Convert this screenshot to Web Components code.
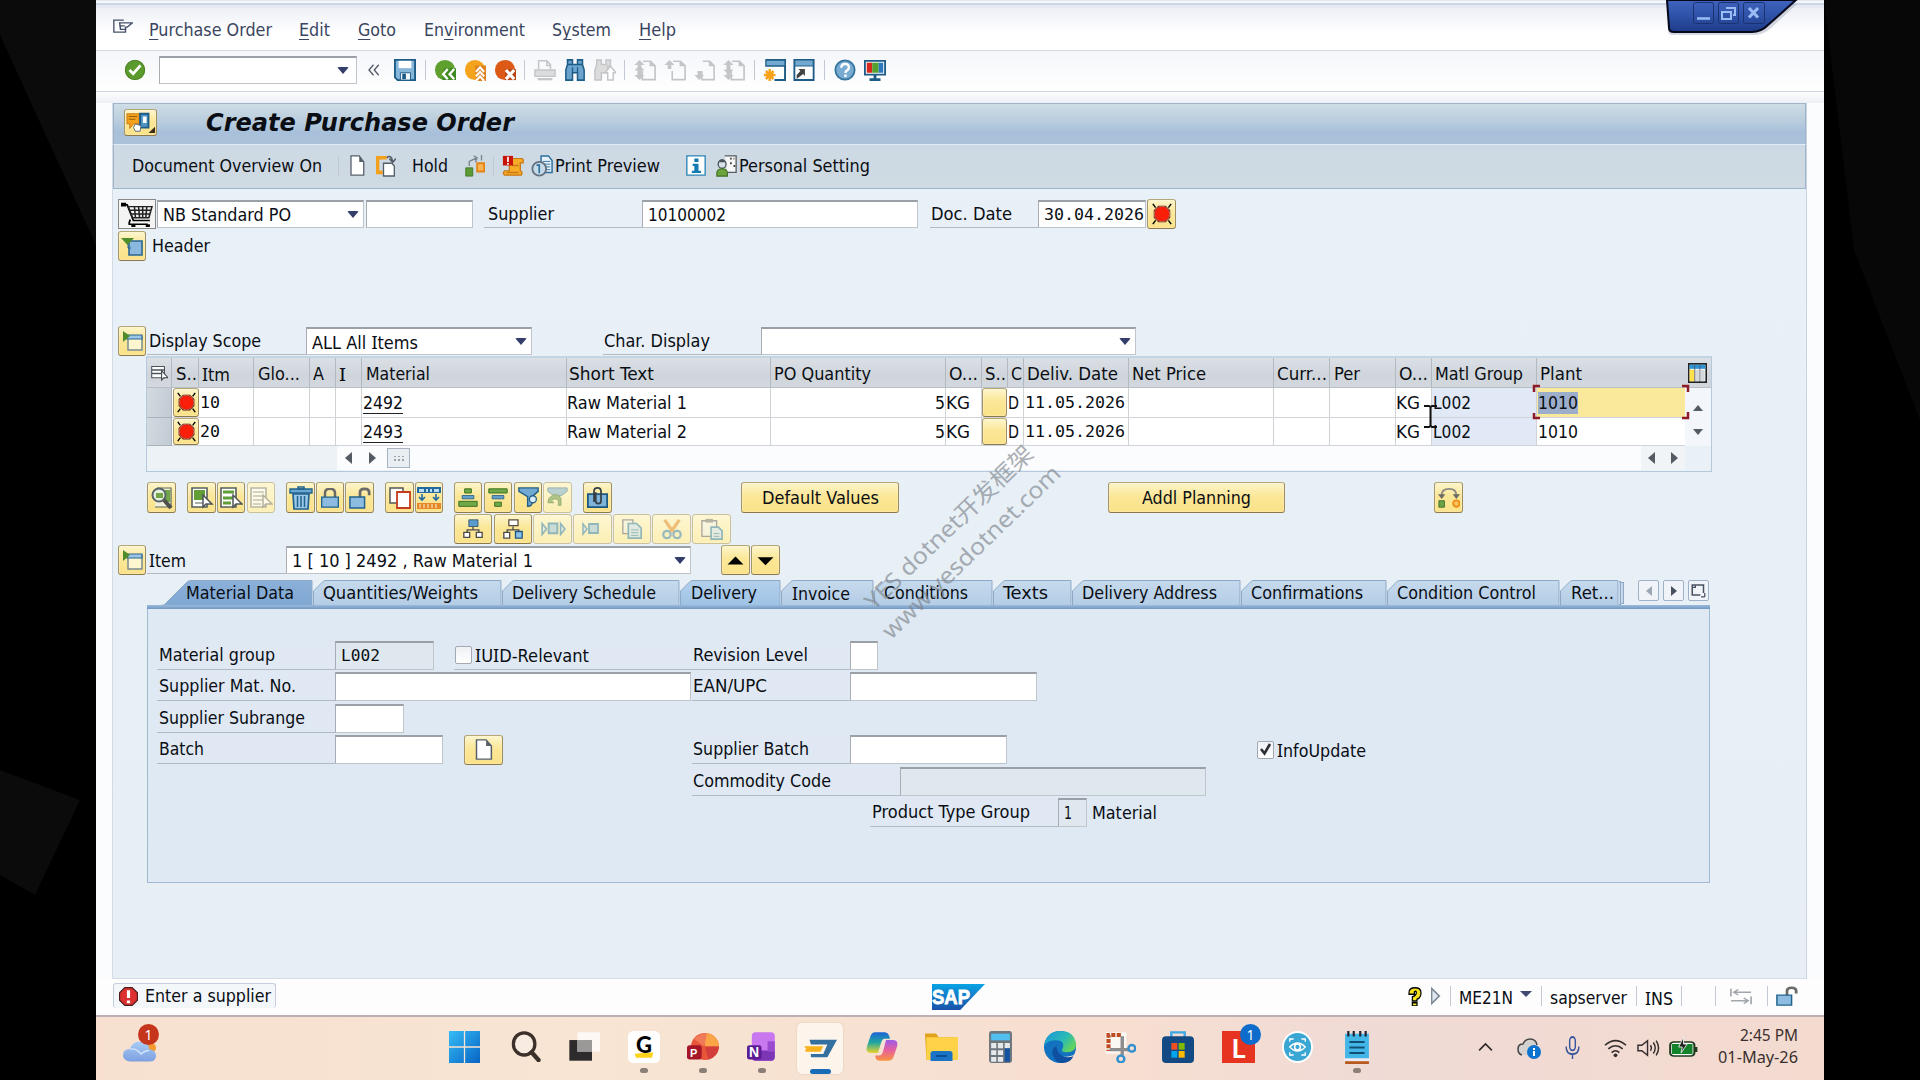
<!DOCTYPE html>
<html lang="en"><head><meta charset="utf-8"><title>Create Purchase Order</title>
<style>
html,body{margin:0;background:#000;overflow:hidden}
body{width:1920px;height:1080px}
</style></head><body>
<desk-screen></desk-screen>
<script>
const BASE='*{box-sizing:border-box}:host{display:block}.row{display:flex;align-items:center}.row>*{flex:none}';
// Register an element from its css and markup.
function define(name,css,html){
  customElements.define(name,class extends HTMLElement{
    constructor(){super();const r=this.attachShadow({mode:'open'});
      r.innerHTML='<style>'+BASE+css+'</style>'+(typeof html==='function'?html(this):html);}
  });
}
// A flex row: each item is [left, right, markup, style]; gaps become margins.
function row(x0,h,items,style=''){
  let x=x0,o='<div class="row" style="height:'+h+'px;'+style+'">';
  for(const [l,r,m,s] of items){o+=`<div style="margin-left:${l-x}px;width:${r-l}px;${s||''}">${m}</div>`;x=r;}
  return o+'</div>';
}
const cap=s=>s.replace(/I/g,'<span style="font-family:\'Noto Sans\',sans-serif">I</span>');
const ft=(w,s,o='')=>`<fit-text w="${w}" style="${o}">${cap(s)}</fit-text>`;
const t=(l,r,s,o='')=>[l,r,ft(r-l,s,o)];
const ic=(l,r,n,h=24)=>[l,r,`<sap-icon name="${n}" w="${r-l}" h="${h}"></sap-icon>`];
const bt=(l,r,n,h=30,d='',iw=24)=>[l,r,`<sap-button ${d} style="height:${h}px"><sap-icon name="${n}" w="${iw}" h="${iw}"></sap-icon></sap-button>`];
const lab=(l,r,a,b,s,h=28)=>[l,r,`<sap-label style="height:${h}px;padding-left:${a-l}px">${ft(b-a,s)}</sap-label>`];
const inp=(l,r,m='',cls='',h=28)=>[l,r,`<sap-input ${cls} style="height:${h}px">${m}</sap-input>`];
const MONO="font-family:'DejaVu Sans Mono',monospace;font-size:16.5px";

// Text stretched or narrowed to a given advance width.
customElements.define('fit-text',class extends HTMLElement{
  constructor(){super();this.attachShadow({mode:'open'}).innerHTML='<style>:host{display:block;height:22px;line-height:22px;white-space:pre;overflow:visible}span{display:inline-block;transform-origin:0 50%}</style><span><slot></slot></span>';}
  connectedCallback(){const w=+this.getAttribute('w');this.style.width=w+'px';const s=this.shadowRoot.querySelector('span');
    const n=parseFloat(getComputedStyle(s).width); if(n)s.style.transform='scaleX('+(w/n)+')';}
});

const circ=(c,m)=>`<circle cx="12" cy="12" r="11" fill="${c}"/>${m}`;
const G='#c3c5c8';
const doc=(m)=>`<path d="M10 2.500h8l5 5v15H9V13" fill="none" stroke="${G}" stroke-width="1.800"/><path d="M17 2v6h6z" fill="${G}"/>${m}`;
const up=(x,y,c=G)=>`<path d="M${x} ${y}l5.500 5.500h-3.500v4.500h-4v-4.500h-3.500z" fill="${c}"/>`;
const dn=(x,y,c=G)=>`<path d="M${x} ${y}l5.500 -5.500h-3.500v-4.500h-4v4.500h-3.500z" fill="${c}"/>`;
const page='M4 1h11l6 7v15H4z';
const I={
menu:'<path d="M13 3H1v17h14v-4" fill="none" stroke="#46506a" stroke-width="1.600"/><path d="M8 7h15l-6 6h-2v3H9zM9 11h5" fill="#fff" stroke="#46506a" stroke-width="1.800"/>',
ok:circ('#5b9a2d','<circle cx="12" cy="12" r="10.500" fill="none" stroke="#4a7f26"/><path d="M6 12l4 4 8-9" fill="none" stroke="#fff" stroke-width="3"/>'),
back2:'<path d="M10 5l-6 7 6 7M17 5l-6 7 6 7" fill="none" stroke="#555b66" stroke-width="1.800"/>',
save:'<path d="M1 1h22v22H4l-3-3z" fill="#86b6da" stroke="#1b5a85" stroke-width="2"/><path d="M5 2h14v8H5z" fill="#fff"/><path d="M7 15h11v8H7z" fill="#f2f7fb" stroke="#1b5a85"/><path d="M9 16h4v6H9z" fill="#1b5a85"/>',
gback:circ('#5fa02f','<path d="M11 10h13v13H9z" fill="#3f8a22"/><path d="M15 11l-5 5.500 5 5.500M22 11l-5 5.500 5 5.500" fill="none" stroke="#fff" stroke-width="2.500"/>'),
gup:circ('#f5a21c','<path d="M12 7h12v17H13z" fill="#dd831f"/><path d="M13 14l4.500-5 4.500 5M13 19l4.500-5 4.500 5M13 24l4.500-5 4.500 5" fill="none" stroke="#fff" stroke-width="2.300"/>'),
gx:circ('#dc5a16','<path d="M12 11h12v12H12z" fill="#b84714"/><path d="M13 12l9 10M22 12l-9 10" stroke="#fff" stroke-width="3.400"/>'),
print:`<g fill="none" stroke="${G}" stroke-width="1.600"><path d="M5 11V2h9l4 4v5M14 2v5h4"/></g><path d="M1 12h22v7H1z" fill="#dadcde" stroke="${G}" stroke-width="1.500"/><path d="M4 22h16" stroke="${G}" stroke-width="2.500"/>`,
find:'<path d="M3 6V1h6v5h6V1h6v5l2 6v11h-8v-8H9v8H1V12z" fill="#6aa3cd" stroke="#1e5c88" stroke-width="1.800"/><path d="M3 6h6M15 6h6M9 9v6M15 9v6" stroke="#1e5c88" stroke-width="1.500"/>',
findn:`<path d="M3 6V1h5v5h5V1h5v7h-3v7H8v8H1V12z" fill="#dcdcdd" stroke="${G}" stroke-width="1.600"/><path d="M18 8l6 7h-3v8h-6v-8h-3z" fill="#fff" stroke="${G}" stroke-width="1.600"/>`,
d1:doc(up(6,1)+dn(6,23)+up(6,7)),d2:doc(up(6,1)),d3:doc(dn(6,23)),d4:doc(up(6,1)+dn(6,23)+dn(6,17)),
newwin:'<path d="M3 2h20v20H12" fill="#fff" stroke="#1c5c86" stroke-width="2"/><path d="M3 2h20v6H3z" fill="#73a9d0" stroke="#1c5c86" stroke-width="1.300"/><path d="M7 11v12M1 17h12M3 13l8 8M11 13l-8 8" stroke="#f6a31a" stroke-width="2.500"/>',
short:'<path d="M1.500 2h21v20h-21z" fill="#fff" stroke="#1c5c86" stroke-width="2"/><path d="M2 2h20v6H2z" fill="#73a9d0" stroke="#1c5c86"/><path d="M4 21v-4l4-4-2-2h7v7l-2-2z" fill="#444"/>',
help:'<circle cx="12" cy="12" r="10.500" fill="#79acd2" stroke="#35749f" stroke-width="2"/><path d="M8 9.500q0-4 4.200-4t4 3.700q0 2-2 3.200-1.700 1-1.700 3M12.500 17v2.500" fill="none" stroke="#fff" stroke-width="2.600"/>',
mon:'<path d="M1 2h22v15H1z" fill="#fff" stroke="#1c5c86" stroke-width="2"/><path d="M3 4h6v11H3z" fill="#d82a1c"/><path d="M9 4h7v11H9z" fill="#54a12e"/><path d="M16 4h5v11h-5z" fill="#2c79c0"/><path d="M12 17v5M6 22.500h12" stroke="#1c5c86" stroke-width="3"/>',
serv:'<path d="M1 3h13v11H8l-4 5v-5H1z" fill="#f5a11b" stroke="#c87812"/><path d="M3 6h9M3 9h7" stroke="#8e5a10"/><path d="M15 3h9v15h-9z" fill="#4f93c4" stroke="#1c5c86" stroke-width="2"/><path d="M18 6h4v7h-4z" fill="#fff"/><path d="M10 14l6 2-1 6h-5l-2-4z" fill="#fff" stroke="#567"/><path d="M31 17v7h-7z" fill="#3a2c16"/>',
page:`<path d="${page}" fill="#fff" stroke="#56606a" stroke-width="1.700"/><path d="M15 1v7h6z" fill="#56606a"/>`,
copyy:'<path d="M13 3H2v16h6" fill="none" stroke="#f3a01d" stroke-width="4"/><path d="M9 9h10l3 3v11H9z" fill="#fff" stroke="#555f69" stroke-width="1.600"/><path d="M13 3q5-4 7 4M16 4l4 4 4-4" fill="none" stroke="#555f69" stroke-width="1.800"/>',
sub:'<path d="M2 14h8v9H2z" fill="#5c9a35" stroke="#44782a"/><path d="M15 9h8v9h-8z" fill="#f9b455" stroke="#e38413" stroke-width="2"/><path d="M6 12V7l9-4M11 1l4 2-2 5M20 0v6" fill="none" stroke="#7a848d" stroke-width="1.500"/>',
msg:'<path d="M8 4h13q3 0 2 5h-3v9q3 1 1 5H3q-3-2 0-5h5z" fill="#f7ac28" stroke="#c77715" stroke-width="1.400"/><path d="M5 20h13M11 12h7" stroke="#c77715" stroke-width="1.500"/><path d="M1 1h11v11H1z" fill="#c81408"/><path d="M6.500 2v6M6.500 9v2" stroke="#fff" stroke-width="1.800"/>',
prev:'<path d="M11 1h8l4 5v13H11z" fill="#e7f2fa" stroke="#2c6f9c" stroke-width="1.600"/><path d="M13 7h8M13 10h8M13 13h8M13 16h8" stroke="#2c6f9c"/><circle cx="9" cy="15" r="7.500" fill="#c6dbea" stroke="#66737f" stroke-width="2"/><path d="M9 10v10M6 11h3" stroke="#2c6f9c" stroke-width="1.800"/>',
info:'<path d="M1 1h22v22H1z" fill="#fff" stroke="#2b84b5" stroke-width="1.600"/><path d="M10 4h5v4h-5zM8 10h7v8h3v2.500H7V18h3v-5.500H8z" fill="#167bb1"/>',
person:'<path d="M10 1h13v18H13" fill="#f6f6f6" stroke="#575d63" stroke-width="1.500"/><path d="M16 4h2M20 4h1M16 9h2M20 12h2" stroke="#444" stroke-width="2"/><circle cx="7" cy="10" r="4.500" fill="#dbe2e7" stroke="#48535d" stroke-width="1.500"/><path d="M3 8q4-7 8 0z" fill="#48535d"/><path d="M1 23v-4q1-4 6-4t6 4v4z" fill="#6da43c" stroke="#3d6e25" stroke-width="1.300"/>',
cart:'<path d="M1 4h5l6 17h16M9 20l-1 3v2h18" fill="none" stroke="#000" stroke-width="1.700"/><path d="M7 6h23l-3 12H11zM8 10h21M10 14h18M13 6l1 12M17 6l1 12M21 6v12M25 6l-1 12" fill="none" stroke="#222" stroke-width="1.500"/><path d="M0 2h5v4H0zM10 25h4v3h-4zM24 25h4v3h-4z"/>',
shut:'<path d="M9 7h13v14H9z" fill="#8bb9dd" stroke="#2a6693" stroke-width="1.600"/><path d="M8 7v7h3" fill="none" stroke="#2a6693"/><path d="M1 4h13l-6.500 7z" fill="#4f8d2a"/>',
open:'<path d="M8 8h14v13H8z" fill="#fdf6cf" stroke="#7a8d92" stroke-width="1.500"/><path d="M7 6h15v4H7z" fill="#9cc6e6" stroke="#2a6693" stroke-width="1.200"/><path d="M3 2l7 5-7 6z" fill="#4f8d2a"/>',
red:'<g stroke="#000" stroke-width="1.600"><path d="M2 1l3 4M22 1l-3 4M2 23l3-4M22 23l-3-4"/></g><path d="M8 3h8l5 5v8l-5 5H8l-5-5V8z" fill="#5c1208"/><circle cx="12" cy="12" r="8" fill="#fa1f08"/><circle cx="12" cy="12" r="8.500" fill="none" stroke="#d48a7a" stroke-width=".8"/>',
detail:'<path d="M7 2h14v19H5" fill="#f2efd8" stroke="#5d6a58" stroke-width="1.200"/><path d="M14 4h6v12h-6z" fill="#71a648"/><circle cx="9" cy="9" r="6.500" fill="#e7f0df" stroke="#59636a" stroke-width="2"/><path d="M6 7h7v5H6z" fill="#71a648"/><path d="M14 14l7 8" stroke="#4e4f4b" stroke-width="4"/>',
selall:'<path d="M2 2h15v19H2z" fill="#fff" stroke="#55605a" stroke-width="1.600"/><path d="M4 4h11v10H4z" fill="#5f9f36"/><path d="M5 17h8" stroke="#55605a"/><path d="M13 9v12l3-3h6z" fill="#fff" stroke="#4e555b" stroke-width="1.500"/>',
selblk:'<path d="M2 2h15v19H2z" fill="#fff" stroke="#55605a" stroke-width="1.600"/><path d="M4 6h11M4 12h11M4 17h8" stroke="#5f9f36" stroke-width="3"/><path d="M14 9v12l3-3h6z" fill="#fff" stroke="#4e555b" stroke-width="1.500"/>',
desel:'<path d="M2 2h15v19H2z" fill="#fff" stroke="#8a8f92" stroke-width="1.600"/><path d="M4 6h11M4 10h11M4 14h11M4 18h8" stroke="#a4a7aa" stroke-width="1.500"/><path d="M14 9v12l3-3h6z" fill="#fff" stroke="#888" stroke-width="1.500"/>',
trash:'<path d="M4 8h16l-1 15H5z" fill="#9cc9e8" stroke="#22628f" stroke-width="1.700"/><path d="M1 3h22v4H1z" fill="#6aa7d2" stroke="#22628f" stroke-width="1.400"/><path d="M9 1h6v2H9zM8.500 10v11M12 10v11M15.500 10v11" fill="none" stroke="#22628f" stroke-width="1.500"/>',
lock:'<path d="M6 11V6q0-5 6-5t6 5v5" fill="none" stroke="#6a6b67" stroke-width="3"/><path d="M2 11h20v12H2z" fill="#8dbce0" stroke="#22628f" stroke-width="1.600"/>',
unlock:'<path d="M12 11V6q0-4 5-4t5 4v3" fill="none" stroke="#6a6b67" stroke-width="3"/><path d="M1 11h16v12H1z" fill="#8dbce0" stroke="#22628f" stroke-width="1.600"/>',
dup:'<path d="M2 2h13v15H2z" fill="#fff" stroke="#565656" stroke-width="1.500"/><path d="M9 6h13v16H9z" fill="#fdfdfd" stroke="#c33c1e" stroke-width="1.800"/>',
scale:'<path d="M0 1h24v6H0z" fill="#2269a0"/><path d="M2 3h5v3H2zM9 3h2v3H9zM13 3h2v3h-2zM17 3h5v3h-5z" fill="#bcdcf2"/><path d="M5 8v5M19 8v5M2 11l3 3 3-3M16 11l3 3 3-3" stroke="#2269a0" fill="none" stroke-width="1.600"/><path d="M0 17h24v6H0z" fill="#e5882a"/><path d="M3 18v4M7 18v4M11 18v4M15 18v4M19 18v4" stroke="#fff0cf"/>',
sasc:'<path d="M8 1h8v5H8zM1 16h22v6H1z" fill="#6fa846" stroke="#3e7422" stroke-width="1.200"/><path d="M5 9h14v4H5z" fill="#639fca" stroke="#245f89"/>',
sdesc:'<path d="M1 1h22v5H1zM8 17h8v5H8z" fill="#6fa846" stroke="#3e7422" stroke-width="1.200"/><path d="M5 9h14v4H5z" fill="#639fca" stroke="#245f89"/>',
filter:'<path d="M1 1h22v4l-7 6v7q0 4-5 4V11L1 5z" fill="#71a9d3" stroke="#245f89" stroke-width="1.600"/><circle cx="17" cy="14" r="4" fill="#d8ebf7" stroke="#245f89" stroke-width="1.500"/>',
unfilter:'<path d="M1 1h22v4l-7 5H8L1 5z" fill="#8fbad6" stroke="#4c7c96"/><path d="M2 13q9-9 14 0v8h-3v-6q-5-3-8 1l3 2H1z" fill="#7da85c" stroke="#557c42"/>',
clip:'<path d="M1 8h22v15H1z" fill="#7fb4da" stroke="#1d5882" stroke-width="2"/><path d="M8 17V5q0-4 4-4t4 4v11q0 3-3 3t-3-3V6" fill="none" stroke="#364148" stroke-width="2"/>',
tree1:'<path d="M7 1h11v8H7z" fill="#5a9bcb" stroke="#2c4f6a"/><path d="M12 9v4M5 17v-4h14v4" fill="none" stroke="#4c4c4c" stroke-width="1.600"/><path d="M1 16h7v6H1zM16 16h7v6h-7z" fill="#fff" stroke="#4c4c4c" stroke-width="1.600"/>',
tree2:'<path d="M7 1h11v7H7z" fill="#fff" stroke="#5a4c3c" stroke-width="1.500"/><path d="M12 9v4M5 17v-4h14v4" fill="none" stroke="#4c4c4c" stroke-width="1.600"/><path d="M1 16h7v7H1z" fill="#fff" stroke="#4c4c4c" stroke-width="1.600"/><path d="M15 15h8v8h-8z" fill="#8cc0e6" stroke="#1d5882" stroke-width="1.600"/>',
nx1:'<path d="M2 7v10l4-5zM19 7v10l4-5z" fill="#dfeaf0" stroke="#4a8fb5" stroke-width="1.500"/><path d="M8 7h8v9H8z" fill="#a9cde3" stroke="#4a8fb5" stroke-width="1.800"/>',
nx2:'<path d="M2 7v10l4-5z" fill="#dfeaf0" stroke="#4a8fb5" stroke-width="1.500"/><path d="M8 7h9v9H8z" fill="#a9cde3" stroke="#4a8fb5" stroke-width="1.800"/>',
copy:'<path d="M2 2h11v15H2z" fill="#f3f3e6" stroke="#778" stroke-width="1.500"/><path d="M8 6h9l5 5v11H8z" fill="#cfe4f2" stroke="#4a8fb5" stroke-width="1.800"/><path d="M11 13h8M11 16h8M11 19h8" stroke="#4a8fb5"/>',
cut:'<path d="M4 2l9 13M20 2l-9 13" stroke="#e79b43" stroke-width="3.500"/><circle cx="6.500" cy="18" r="4" fill="none" stroke="#5797bd" stroke-width="2.500"/><circle cx="17.500" cy="18" r="4" fill="none" stroke="#5797bd" stroke-width="2.500"/>',
paste:'<path d="M1 3h16v17H1z" fill="#f5f5ec" stroke="#778" stroke-width="1.500"/><path d="M5 1h8v4H5z" fill="#888"/><path d="M11 10h8l4 4v9H11z" fill="#d4e7f3" stroke="#4a8fb5" stroke-width="1.800"/><path d="M14 17h6M14 20h6" stroke="#4a8fb5"/>',
planq:'<path d="M4 9q0-7 8-7t8 7" fill="none" stroke="#8a8a80" stroke-width="2"/><path d="M0 8h8l-4 5zM16 8h8l-4 5z" fill="#6b6b64"/><path d="M1 15h6v7H1z" fill="#6aa345" stroke="#3e6c2b"/><circle cx="20" cy="18" r="3.500" fill="#fbc266" stroke="#ef8d10" stroke-width="2"/>',
upb:'<path d="M2 17l10-10 10 10z"/>',dnb:'<path d="M2 8l10 10 10-10z"/>',
cfg:'<path d="M1 1h22v22H1z" fill="#fff" stroke="#222" stroke-width="2"/><path d="M2 2h20v5H2z" fill="#2f93d4"/><path d="M2 8h6v14H2z" fill="#ffe24a"/><path d="M9 8h5v14H9zM16 8h5v14h-5z" fill="#d4d9de"/><path d="M8.500 2v20M15 2v20" stroke="#556"/>',
colsel:'<path d="M1 2h18v16H1z" fill="#fff" stroke="#4c545c" stroke-width="1.500"/><path d="M1 7h18M1 12h14" stroke="#4c545c" stroke-width="2"/><path d="M15 8v13l3-3h6z" fill="#fff" stroke="#3c4248" stroke-width="1.500"/>',
list:'<path d="M15 19H2V3h18v13" fill="none" stroke="#48515f" stroke-width="2.400"/><path d="M22 22h-6M22 22v-6M2 7h5V3" fill="none" stroke="#48515f" stroke-width="2"/>',
stop:'<path d="M7 0h10l7 7v10l-7 7H7l-7-7V7z" fill="#4b1c1c"/><path d="M7.500 1.500h9l6 6v9l-6 6h-9l-6-6v-9z" fill="#dd3030"/><path d="M12 4v10M12 17v3.500" stroke="#fff" stroke-width="4"/>',
sap:'<defs><linearGradient id="g" x2="0" y2="1"><stop offset="0" stop-color="#0aa3e4"/><stop offset="1" stop-color="#1a52a8"/></linearGradient></defs><path d="M0 0h24L12.800 24H0z" fill="url(#g)"/>',
q:'<path d="M3 8q0-6 9-6t9 6-6 8v2H8v-5q6-2 6-5t-3-1v3H3zM8 20h7v4H8z" fill="#f5e21c" stroke="#000" stroke-width="1.800"/>',
tri:'<path d="M5 2v20L19 12z" fill="#dfe6ee" stroke="#7b8794" stroke-width="2.500"/>',
tabs:`<path d="M1 1v11M4 6h19M23 12v11M1 18h19M9 2L4 6l5 4M15 14l5 4-5 4" fill="none" stroke="#a2a7ac" stroke-width="1.800"/>`,
weather:'<defs><linearGradient id="w" x2="0" y2="1"><stop stop-color="#a9cdf5"/><stop offset="1" stop-color="#7d9fe0"/></linearGradient></defs><circle cx="20" cy="11" r="4" fill="#f49a2e"/><path d="M5 22q-5-1-5-5 0-5 5-5 2-6 7-6 7 0 7 6 5 1 5 5.500T19 22z" fill="url(#w)"/><path d="M5 12q5-1 8 4 3-3 6-3" stroke="#d6e7fb" fill="none"/>',
win:'<defs><linearGradient id="b" x2="1" y2="1"><stop stop-color="#35bdf6"/><stop offset="1" stop-color="#0763c4"/></linearGradient></defs><path d="M0 0h11.500v11.500H0zM12.500 0H24v11.500H12.500zM0 12.500h11.500V24H0zM12.500 12.500H24V24H12.500z" fill="url(#b)"/>',
mag:'<circle cx="10.500" cy="10" r="8.600" fill="#f7ebe2" stroke="#3c302a" stroke-width="2.600"/><path d="M16.500 16.500L22 22.500" stroke="#3c302a" stroke-width="3.500" stroke-linecap="round"/>',
task:'<path d="M1 7h17v16H1z" fill="#2d2b2b"/><path d="M7 1h17v15H7z" fill="#fff" opacity=".72"/><path d="M7 7h11v9H7z" fill="#9b9898"/>',
gicon:'<rect width="24" height="24" rx="4" fill="#fff"/><path d="M5 17l14-1-1 4H6z" fill="#ffd21a"/>',
ppt:'<circle cx="13.500" cy="12" r="10.500" fill="#e8563a"/><path d="M13.500 1.500A10.500 10.500 0 0124 12H13.500z" fill="#fba646"/><path d="M13.500 12H24q-1 8-8 10z" fill="#d33d3a"/><path d="M5 6q8-6 10-4l-2 10z" fill="#ef7b58"/><rect y="11" width="11" height="11" rx="2" fill="#a51527"/>',
one:'<rect x="4" y="1" width="19" height="22" rx="3" fill="#c877ef"/><path d="M4 15h19v5q0 3-3 3H7q-3 0-3-3z" fill="#7c35b5"/><path d="M17 8h6v8h-6z" fill="#9a4bd0"/><rect y="11" width="12" height="11" rx="2" fill="#5c1d94"/>',
logon:'<path d="M4 1h20L17 23H5v-4h9l3-12H5z" fill="#33709f"/><path d="M0 9h14l-2 7H1v-3h1z" fill="#f7b11b"/>',
copilot:'<defs><linearGradient id="c" x2="0" y2="1"><stop stop-color="#1c63d8"/><stop offset=".5" stop-color="#21a8a0"/><stop offset="1" stop-color="#e9d32b"/></linearGradient><linearGradient id="d" x2="0" y2="1"><stop stop-color="#9c5ce8"/><stop offset=".5" stop-color="#e8609b"/><stop offset="1" stop-color="#f7953f"/></linearGradient></defs><path d="M7 1h7q3 0 4 5h-4q-2 0-3 4l-2 7H4q-5 0-3-6l2-6q1-4 4-4z" fill="url(#c)"/><path d="M17 23h-7q-3 0-3-4h3q2 0 3-4l2-8h5q5 0 3 6l-2 6q-1 4-4 4z" fill="url(#d)"/>',
folder:'<path d="M0 2h8l2 3h13v18H1z" fill="#e2a11a"/><path d="M1 5h23v18H1z" fill="#ffd248"/><path d="M4 24v-6q0-2 2-2h12q2 0 2 2v6z" fill="#1a73c5"/><path d="M8 20h8" stroke="#0a4d92" stroke-width="1.500"/>',
calc:'<rect x="1" width="22" height="24" rx="2" fill="#6d757d"/><path d="M3 2h18v5H3z" fill="#51c0ef"/><path d="M3 9h5v4H3zM9.500 9h5v4h-5zM16 9h5v4h-5zM3 14.500h5v3.500H3zM9.500 14.500h5v3.500h-5zM3 19.500h5V23H3zM9.500 19.500h5V23h-5z" fill="#e6e8ea"/><path d="M16 13h5v10h-5z" fill="#1352a0"/>',
edge:'<defs><linearGradient id="e" x2="1" y2=".6"><stop stop-color="#1b93da"/><stop offset=".6" stop-color="#27b9b8"/><stop offset="1" stop-color="#63d45d"/></linearGradient></defs><circle cx="12" cy="12" r="12" fill="#1272bf"/><path d="M0 11Q2 0 12 0q11 0 12 10 0 6-7 6-5 0-3-3 2-6-5-6-6 0-9 4z" fill="url(#e)"/><path d="M9 11q-4 12 14 7l-2 2q-2 0-4 0-9 0-8-9z" fill="#fbe6da"/><path d="M9 11q-5 4-1 10 2 3 6 3 6 0 8-5-11 3-13-8z" fill="#0f4f9f"/>',
snip:'<path d="M2 1h15v16H2z" fill="#fbf7f3"/><path d="M13 3H4v12" fill="none" stroke="#c04b22" stroke-width="3" stroke-dasharray="3 1"/><path d="M14 4v14M5 14h14" stroke="#8d8d8d" stroke-width="2.500"/><circle cx="21" cy="13" r="2.500" fill="none" stroke="#3090d0" stroke-width="1.800"/><circle cx="13" cy="21" r="2.500" fill="none" stroke="#3090d0" stroke-width="1.800"/>',
store:'<path d="M7 5V1h10v4" fill="none" stroke="#3aa7e4" stroke-width="1.800"/><rect y="4" width="24" height="20" rx="3" fill="#134a83"/><path d="M7 9h4.500v5H7z" fill="#f25022"/><path d="M12.500 9H17v5h-4.500z" fill="#7fba00"/><path d="M7 15h4.500v5H7z" fill="#00a4ef"/><path d="M12.500 15H17v5h-4.500z" fill="#ffb900"/>',
eye:'<circle cx="12" cy="12" r="12" fill="#fff"/><circle cx="12" cy="12" r="10.500" fill="#3aa6d3"/><path d="M6 12q6-6 12 0-6 6-12 0z" fill="none" stroke="#fff" stroke-width="1.100"/><circle cx="12" cy="12" r="2.200" fill="none" stroke="#fff" stroke-width="1.200"/><path d="M6 8V6h3M18 8V6h-3M6 16v2h3M18 16v2h-3" fill="none" stroke="#fff"/>',
note:'<path d="M1 22h22v2H1z" fill="#b65a1e"/><path d="M1 2h22v18H1z" fill="#42b6e6"/><path d="M0 20h24v1.500H0z" fill="#eef"/><path d="M5 8h14M5 12h14M5 16h14" stroke="#124e74" stroke-width="1.300"/><path d="M4 0v4M9 0v4M15 0v4M20 0v4" stroke="#223" stroke-width="2"/>',
chev:'<path d="M3 16l9-9 9 9" fill="none" stroke="#2d2727" stroke-width="2.200"/>',
cloudi:'<path d="M5 19q-4-1-4-6t5-5q2-5 7-5 6 0 7 6" fill="#d4d1cf" stroke="#444" stroke-width="1.500"/><path d="M5 19h9V9H5z" fill="#d4d1cf"/><circle cx="17" cy="16" r="7" fill="#0c72cf"/><path d="M17 12v2M17 15v5" stroke="#fff" stroke-width="2"/>',
mic:'<rect x="8" y="1" width="8" height="14" rx="4" fill="none" stroke="#35549b" stroke-width="2"/><path d="M3 11q0 8 9 8t9-8M12 19v5" fill="none" stroke="#35549b" stroke-width="2"/>',
wifi:'<path d="M1 9q11-10 22 0M4.500 13q7.500-7 15 0M8 17q4-4 8 0" fill="none" stroke="#352d2d" stroke-width="1.700"/><circle cx="12" cy="20" r="2" fill="#352d2d"/>',
spk:'<path d="M1 9h4l6-5v16l-6-5H1z" fill="none" stroke="#352d2d" stroke-width="1.500"/><path d="M14 9q2 3 0 6M17 6q4 6 0 12M20 4q5 8 0 16" fill="none" stroke="#352d2d" stroke-width="1.500"/>',
batt:'<rect x="1" y="6" width="20" height="14" rx="3" fill="#fff" stroke="#1f3a1c" stroke-width="1.700"/><rect x="2.500" y="8" width="17" height="10" fill="#12832a"/><path d="M22.500 11v5" stroke="#1f3a1c" stroke-width="2"/><path d="M12 1L8 11h3l-1 6 5-9h-3z" fill="#222" stroke="#eee" stroke-width=".8"/>'
};
const VB={serv:'0 0 32 25',cart:'0 0 31 29'};
define('sap-icon',':host{display:block}svg{display:block}',e=>{const n=e.getAttribute('name');
 return `<svg width="${e.getAttribute('w')}" height="${e.getAttribute('h')}" viewBox="${VB[n]||'0 0 24 24'}" preserveAspectRatio="none">${I[n]||''}</svg>`});
define('sap-button',`:host{display:flex;align-items:center;justify-content:center;border:1px solid #a6966a;border-color:#b5a778 #a08c5c #8c794b #a6966a;border-radius:3px;background:linear-gradient(#fdf5cc,#fbe797 45%,#fbe28a);box-shadow:inset 0 0 0 1px #fff3}
:host([off]){background:linear-gradient(#fdf6d2,#fcefb4);border-color:#cbc099}:host([off]) ::slotted(*){opacity:.6}`,'<slot></slot>');
define('sap-label',':host{display:flex;align-items:center;border-bottom:1px solid #b3bac2;background:#e6ebf122}','<slot></slot>');
define('sap-input',':host{display:flex;align-items:center;background:#fff;border:1px solid #a9adb3;border-top:2px solid #9b9fa6;border-right-color:#c0c5cb;border-bottom-color:#c0c5cb;padding-left:5px}:host([ro]){background:#dfe8ef}i{margin-left:auto;margin-right:var(--mr,4px);display:none;border:6px solid transparent;border-top:7px solid #353d6b;border-bottom:0;border-radius:2px}:host([dd]) i{display:block}','<slot></slot><i></i>');
define('sap-check',':host{display:block;width:17px;height:18px;border:1.500px solid #a3a9b1;border-radius:2px;background:linear-gradient(#eef1f5,#fff)}svg{display:block}',e=>e.hasAttribute('on')?'<svg width="15" height="15" viewBox="0 0 15 15"><path d="M3 7l3.500 4.500L12 2" fill="none" stroke="#2c3036" stroke-width="2.600"/></svg>':'');
define('sap-sep',':host{display:block;width:1px;height:20px;background:#c3c9d2}','');

// Menu bar.
define('sap-menu',':host{color:#3a4560}.row{padding-top:3px}u{text-underline-offset:3px;text-decoration-thickness:1.300px}.s{height:8px;background:linear-gradient(#e2e6ef 0 1px,#f4f6fa 1px 3px,#ccd6e6 3px 5px,#e6e9f2 5px 8px)}.m{background:linear-gradient(#eef0f6,#fff 60%);border-bottom:1px solid #d3d8df;height:43px}',
'<div class="s"></div><div class="m">'+row(96,41,[
 [113,133,'<sap-icon name="menu" w="20" h="17"></sap-icon>','margin-top:-8px'],
 t(149,272,'<u>P</u>urchase Order'),t(299,330,'<u>E</u>dit'),t(358,396,'<u>G</u>oto'),t(424,525,'En<u>v</u>ironment'),t(552,611,'S<u>y</u>stem'),t(639,676,'<u>H</u>elp')])+'</div>');
const sep=x=>[x,x+1,'<sap-sep></sap-sep>'];
define('sap-toolbar',':host{background:linear-gradient(#f4f6fa,#fff);border-bottom:1px solid #cfd6df;height:41px}',
row(96,38,[ic(124,146,'ok',22),[159,357,'<sap-input dd style="height:28px;--mr:7px"></sap-input>'],ic(366,384,'back2',18),ic(394,416,'save',22),sep(425),ic(434,456,'gback',22),ic(464,486,'gup',22),ic(494,516,'gx',22),sep(524),ic(534,556,'print',22),ic(565,585,'find',22),ic(594,616,'findn',22),sep(624),ic(634,656,'d1',22),ic(664,686,'d2',22),ic(694,715,'d3',22),ic(723,745,'d4',22),sep(754),ic(763,786,'newwin'),ic(793,815,'short'),sep(824),ic(834,856,'help',22),ic(864,886,'mon',22)]));
define('sap-title',':host{height:42px;border:1px solid #9fb3c9;border-bottom-color:#e3ecf5;background:linear-gradient(#cfdde6,#b8ccdd 45%,#a8c0da 70%,#aac1d9)}',
row(114,38,[[124,157,'<sap-button style="height:27px"><sap-icon name="serv" w="30" h="23"></sap-icon></sap-button>','margin-top:-2px'],[206,516,'<fit-text w="308" style="font:italic bold 24px/30px \'DejaVu Sans Condensed\',\'DejaVu Sans\',sans-serif;height:30px">Create Purchase Order</fit-text>']]));
define('sap-apptools',':host{height:44px;border:1px solid #9fb3c9;border-top:0;background:linear-gradient(#cdd9e4,#cfdae2)}',
row(114,41,[t(132,322,'Document Overview On'),sep(338),ic(348,366,'page',21),ic(376,396,'copyy',22),t(412,448,'Hold'),ic(464,485,'sub',22),sep(493),ic(502,524,'msg',21),ic(531,553,'prev',22),t(555,660,'Print Preview'),ic(686,706,'info',21),ic(716,737,'person',22),t(739,870,'Personal Setting')]));
const one='margin-top:1px';
define('sap-header','',row(113,30,[[118,156,'<div style="width:38px;height:30px;border:1px solid #888;background:#f4f4f4;padding:1px 2px"><sap-icon name="cart" w="32" h="27"></sap-icon></div>'],inp(157,364,ft(128,'NB Standard PO'),'dd'),inp(366,473),lab(484,642,488,554,'Supplier'),inp(642,918,ft(78,'10100002')),lab(930,1038,931,1012,'Doc. Date'),inp(1038,1146,ft(100,'30.04.2026',MONO)),bt(1147,1176,'red',30,'',22)])
+row(113,30,[bt(118,146,'shut'),t(152,210,'Header')],'margin-top:2px'));

// Item table.
const C=[147,172,199,254,310,336,362,567,771,946,982,1008,1024,1129,1274,1330,1396,1432,1537,1685];
const H=[null,[176,197,'S..'],[202,230,'Itm'],[258,300,'Glo...'],[313,324,'A'],[339,346,'I'],[366,430,'Material'],[569,654,'Short Text'],[774,871,'PO Quantity'],[949,978,'O...'],[985,1006,'S..'],[1011,1022,'C'],[1027,1118,'Deliv. Date'],[1132,1206,'Net Price'],[1277,1327,'Curr...'],[1334,1360,'Per'],[1399,1428,'O...'],[1435,1523,'Matl Group'],[1540,1582,'Plant']];
const cell=(i,m,x,cls='')=>`<div class="c ${cls}" style="width:${C[i+1]-C[i]}px;padding-left:${x?x-C[i]:0}px">${m}</div>`;
function trow(n,h){const a={2:[200,220,n+'0',MONO],6:[363,403,n==1?'2492':'2493'],7:[567,687,'Raw Material '+n],8:[935,945,'5'],9:[946,970,'KG'],11:[1008,1019,'D'],12:[1025,1125,'11.05.2026',MONO],16:[1396,1420,'KG'],17:[1433,1471,'L002'],18:[1538,1578,'1010']};
 let o=`<div class="tr" style="height:${h}px">`;
 for(let i=0;i<19;i++){let m='',x=0;
  if(i==0){o+=cell(i,'',0,'hd');continue}
  if(i==1){o+=cell(i,`<sap-button style="width:26px;height:${h-1}px"><sap-icon name="red" w="21" h="21"></sap-icon></sap-button>`,173,'nb');continue}
  if(i==10){o+=cell(i,`<sap-button style="width:25px;height:${h-1}px"></sap-button>`,982,'nb');continue}
  if(a[i]){x=a[i][0];m=ft(a[i][1]-x,a[i][2],a[i][3]||'');}
  o+=cell(i,m,x,(i==6?'ln ':'')+(i==17?'mg ':'')+(i==18?(n==1?'sel':'nb'):''));}
 return o+'</div>';}
define('sap-table',`:host{width:1566px;height:116px;border:1px solid #b4c9dc;border-top:2px solid #c3d5e3;background:#e9f0f6}
.tr{display:flex;width:1538px}.c{flex:none;height:100%;border-right:1px solid #cfd2d6;border-bottom:1px solid #d0d3d7;background:#fff;display:flex;align-items:center}
.h{width:1564px;height:30px;background:linear-gradient(#dae0e6,#cfd5da 60%,#d2d8dd);border-bottom:1px solid #b9bfc6}.h .c{background:none;border-bottom:0;border-right-color:#b3b9c0;padding-top:2px}
.hd{background:linear-gradient(100deg,#d3dae1,#c2cad3);border-color:#aab2bb}.nb{border-right:0}.mg{background:#e0e9f5}.ln fit-text{border-bottom:1.500px solid #222}
.sel{background:#fbe99b;border-right:0}.sel fit-text{background:#9daecb}.b{display:grid;grid-template-columns:1538px 26px}.v{background:#f3f6fa;display:flex;flex-direction:column;align-items:center;padding-top:17px;gap:18px}
.a{width:0;height:0;border:5px solid transparent}.u{border-bottom:6px solid #555b63;border-top:0}.d{border-top:6px solid #555b63;border-bottom:0}.l{border-right:7px solid #555b63;border-left:0;border-top-width:6px;border-bottom-width:6px}.r{border-left:7px solid #555b63;border-right:0;border-top-width:6px;border-bottom-width:6px}
.sb{background:linear-gradient(90deg,#edf2f7 0 190px,#fbfcfd 190px 1494px,#f1f4f7 1494px 1538px,#e9f0f6 1538px)}.th{height:20px;border:1px solid #a9b3bf;background:#e9eef3;display:grid;grid-template-columns:2px 2px 2px;gap:2px;place-content:center}.th i{width:2px;height:1.500px;background:#9aa3ae}`,
'<div class="h tr">'+H.map((v,i)=>i?cell(i,ft(v[1]-v[0],v[2]),v[0],i==18?'nb':''):cell(0,'<sap-icon name="colsel" w="17" h="17"></sap-icon>',151)).join('')+'<div style="padding:5px 0 0 3px"><sap-icon name="cfg" w="19" h="20"></sap-icon></div></div>'
+'<div class="b"><div>'+trow(1,30)+trow(2,28)+'</div><div class="v"><i class="a u"></i><i class="a d"></i></div></div>'
+'<div class="sb">'+row(147,24,[[345,352,'<div class="a l"></div>'],[369,376,'<div class="a r"></div>'],[387,410,'<div class="th"><i></i><i></i><i></i><i></i><i></i><i></i></div>'],[1648,1655,'<div class="a l"></div>'],[1671,1678,'<div class="a r"></div>']])+'</div>');

define('sap-items','',
row(113,30,[bt(118,146,'open'),lab(147,306,149,261,'Display Scope'),inp(306,532,ft(106,'ALL All Items'),'dd'),lab(603,761,604,710,'Char. Display'),inp(761,1136,'','dd')])
+'<sap-table style="margin-left:33px"></sap-table>'
+row(113,31,[bt(147,176,'detail',31),bt(187,216,'selall',31),bt(217,245,'selblk',31),bt(247,275,'desel',31,'off'),bt(286,315,'trash',31),bt(316,344,'lock',31,'',20),bt(345,374,'unlock',31,'',22),bt(385,414,'dup',31),bt(415,443,'scale',31),bt(454,482,'sasc',31,'',20),bt(484,512,'sdesc',31,'',20),bt(514,542,'filter',31,'',21),bt(543,572,'unfilter',31,'off',21),bt(583,612,'clip',31,'',21),
 [741,899,'<sap-button style="height:31px">'+ft(117,'Default Values')+'</sap-button>'],[1108,1285,'<sap-button style="height:31px">'+ft(109,'Addl Planning')+'</sap-button>'],bt(1434,1463,'planq',31,'',22)],'margin-top:10px')
+row(113,30,[bt(454,492,'tree1',30,'',20),bt(494,532,'tree2',30,'',20),bt(533,572,'nx1',30,'off',26),bt(573,612,'nx2',30,'off'),bt(613,651,'copy',30,'off',22),bt(652,691,'cut',30,'off',22),bt(692,731,'paste',30,'off',22)],'margin-top:1px')
+row(113,30,[bt(118,146,'open'),lab(147,286,149,186,'Item'),inp(286,691,ft(241,'1 [ 10 ] 2492 , Raw Material 1'),'dd'),bt(721,750,'upb',30,'',19),bt(751,780,'dnb',30,'',19)],'margin-top:1px'));

// Detail tabs: attributes w (width), k (left slope run), s (state).
define('sap-tab',':host{display:grid}:host>*{grid-area:1/1}svg{display:block}.x{padding-top:2px;padding-left:var(--p)}',e=>{const w=+e.getAttribute('w'),k=+e.getAttribute('k')||10,s=e.getAttribute('s')||'n';
 const c={n:['#c6daec','#b4cde6'],a:['#8bb0d8','#7fa8d3'],h:['#b3d0eb','#9fc3e6']}[s];const b=k>20?`M0 25h2L${k} 3q2-2.500 5-2.500H${w-1}V25`:`M.5 25V11L${k} 1.500q1-1 3-1H${w-1}V25`;
 return `<svg width="${w}" height="25"><defs><linearGradient id="a" x2="0" y2="1"><stop stop-color="${c[0]}"/><stop offset="1" stop-color="${c[1]}"/></linearGradient></defs><path d="${b}" fill="url(#a)" stroke="#8ea9c6"/></svg><div class="x"><slot></slot></div>`});
const T=[[162,313,186,294,'Material Data',24,'a'],[313,502,323,478,'Quantities/Weights'],[502,680,512,656,'Delivery Schedule'],[680,781,691,757,'Delivery',10,'h'],[781,874,792,850,'Invoice'],[874,993,884,968,'Conditions'],[993,1072,1003,1048,'Texts'],[1072,1241,1082,1217,'Delivery Address'],[1241,1387,1251,1363,'Confirmations'],[1387,1560,1397,1536,'Condition Control'],[1560,1619,1571,1614,'Ret...']];
define('sap-tabs','.n{height:21px;border:1px solid #9fb1c8;border-radius:2px;background:#f0f4f9;display:grid;place-content:center;margin-top:-4px}.a{border:5px solid transparent}.l{border-right:6px solid #9ba6b3;border-left:0}.r{border-left:6px solid #48515f;border-right:0}.st{height:24px;border:1px solid #8ea9c6;border-left:0;background:#c6daec}.bar{margin-left:34px;width:1563px;height:4px;background:linear-gradient(#9cbbdb,#7198c4)}',
row(113,25,T.map(v=>[v[0],v[1],`<sap-tab w="${v[1]-v[0]}" k="${v[5]||10}" s="${v[6]||'n'}" style="--p:${v[2]-v[0]}px">${ft(v[3]-v[2],v[4])}</sap-tab>`]).concat([[1619,1621,'<div class="st"></div>'],[1621,1624,'<div class="st" style="height:22px"></div>'],[1638,1659,'<div class="n"><div class="a l"></div></div>'],[1663,1684,'<div class="n"><div class="a r"></div></div>'],[1688,1709,'<div class="n"><sap-icon name="list" w="15" h="15"></sap-icon></div>']]))+'<div class="bar"></div>');
const R=(mt,it)=>row(148,29,it,'margin-top:'+mt+'px');
const L=(l,r,a,b,s)=>lab(l,r,a,b,s,29),N=(l,r,m,c)=>inp(l,r,m,c,29);
define('sap-form',':host{margin-left:34px;width:1563px;height:274px;background:#dfe9f4;border:1px solid #a0bad3;border-top:0;padding-top:32px}',
R(0,[L(157,335,159,275,'Material group'),N(335,434,ft(39,'L002',MONO),'ro'),[454,693,`<sap-label style="height:29px;padding-left:1px"><sap-check style="margin-right:3px"></sap-check>${ft(114,'IUID-Relevant')}</sap-label>`],L(693,850,693,808,'Revision Level'),N(850,878)])
+R(2,[L(157,335,159,296,'Supplier Mat. No.'),N(335,691),L(692,850,693,767,'EAN/UPC'),N(850,1037)])
+R(3,[L(157,335,159,305,'Supplier Subrange'),N(335,404)])
+R(2,[L(157,335,159,204,'Batch'),N(335,443),bt(464,503,'page',30,'',21),L(692,850,693,809,'Supplier Batch'),N(850,1007),[1257,1274,'<sap-check on></sap-check>'],t(1277,1366,'InfoUpdate')])
+R(3,[L(692,900,693,831,'Commodity Code'),N(900,1206,'','ro')])
+R(2,[L(870,1058,872,1030,'Product Type Group'),N(1058,1087,ft(8,'1'),'ro'),t(1092,1157,'Material')]));
define('sap-status',':host{height:38px;background:#fdfdfe;border-bottom:2px solid #bdb0b2}.m{height:25px;border:1px solid #c6cedd;border-bottom:0;border-radius:3px;background:#f4f7fa;display:flex;align-items:center;gap:7px;padding-left:5px}.g{display:grid}.g>*{grid-area:1/1}.d{border:6px solid transparent;border-top:6px solid #40496f;border-bottom:0}',
row(96,34,[[113,276,`<div class="m"><sap-icon name="stop" w="19" h="19"></sap-icon>${ft(126,'Enter a supplier')}</div>`,'margin-top:-1px'],[932,985,'<div class="g"><sap-icon name="sap" w="53" h="26"></sap-icon><fit-text w="38" style="font:bold 21px/26px \'Liberation Sans\',sans-serif;height:26px;color:#fff;-webkit-text-stroke:.8px #fff">SAP</fit-text></div>','margin-top:2px'],ic(1407,1423,'q',20),ic(1429,1442,'tri',18),sep(1450),t(1459,1513,'ME21N','margin-top:3px'),[1520,1532,'<div class="d"></div>','margin-top:-4px'],sep(1541),t(1550,1627,'sapserver','margin-top:3px'),sep(1636),t(1645,1673,'INS','margin-top:3px'),sep(1681),sep(1715),ic(1730,1752,'tabs',17),sep(1767),ic(1776,1798,'unlock',20)]));
define('os-taskbar',`:host{height:63px;background:linear-gradient(90deg,#f7e0d0,#f8e5d3 28%,#f6ded1 60%,#f0dad5 74%,#f4dbd0);font-family:'Noto Sans',sans-serif;color:#3a2f2d}.i{display:grid;height:63px;align-content:start;justify-items:center;position:relative;padding-top:15px}.i>i{position:absolute;top:52px;width:8px;height:5px;border-radius:3px;background:#8c7f78}.act{background:#fdf4ec;border-radius:5px;height:51px;display:grid;place-items:center;position:relative;box-shadow:0 0 2px #d8c4b6}.act i{position:absolute;bottom:0;width:21px;height:5px;border-radius:3px;background:#1a6bb5}.bd{position:absolute;top:8px;right:-6px;width:21px;height:21px;border-radius:50%;background:#c5351c;color:#fff;font-size:14px;line-height:21px;text-align:center}.tx{position:absolute;color:#fff;font:bold 11px/14px 'Liberation Sans',sans-serif}`,
(()=>{const it=(l,r,n,h=32,x='')=>[l,r,`<div class="i"><sap-icon name="${n}" w="${r-l}" h="${h}"></sap-icon>${x}</div>`];const D='<i></i>';
return row(96,61,[[123,156,'<div class="i" style="padding-top:18px"><sap-icon name="weather" w="33" h="30"></sap-icon><span class="bd" style="right:-3px">1</span></div>'],it(449,480,'win'),it(511,541,'mag',31),it(568,600,'task',31),it(628,660,'gicon',32,'<span class="tx" style="font:900 22px/24px Lato,sans-serif;color:#000;top:17px">G</span>'+D),it(687,719,'ppt',31,'<span class="tx" style="left:3px;top:30px">P</span>'+D),it(747,776,'one',31,'<span class="tx" style="left:2px;top:29px;font-size:14px">N</span>'+D),[797,843,'<div class="act"><sap-icon name="logon" w="33" h="19"></sap-icon><i></i></div>','margin-top:2px'],it(866,898,'copilot',31),it(925,958,'folder',30),it(988,1013,'calc'),it(1044,1076,'edge'),it(1103,1136,'snip'),it(1162,1194,'store'),[1222,1255,'<div class="i"><span style="width:33px;height:32px;background:#e63420;color:#fff;font:bold 27px/34px Lato,sans-serif;text-align:center">L</span><span class="bd" style="background:#0e6ccd">1</span></div>'],it(1282,1313,'eye'),it(1344,1370,'note',33,D),ic(1477,1494,'chev',17),ic(1517,1541,'cloudi',24),ic(1564,1581,'mic',23),ic(1604,1627,'wifi',22),ic(1637,1660,'spk',22),ic(1669,1698,'batt',24),[1718,1799,`<div style="padding-left:22px">${ft(58,'2:45 PM','font-size:16.500px')}</div>${ft(80,'01-May-26','font-size:16.500px')}`,'margin-top:-3px']]);})());
define('win-grip',':host{position:absolute;left:1664px;top:0}svg{display:block}',
'<svg width="144" height="42"><defs><linearGradient id="g" x2="0" y2="1"><stop stop-color="#3f62bd"/><stop offset=".5" stop-color="#2f52a8"/><stop offset="1" stop-color="#1d3a86"/></linearGradient></defs><path d="M4 2v29q0 4 5 4h80q10 0 17-6l27-25z" fill="#8a93a8" opacity=".35"/><path d="M3 0l2 28q0 4 5 4h78q9 0 16-7L132 0z" fill="url(#g)" stroke="#05081a" stroke-width="2"/><g fill="none" stroke="#1b3271"><rect x="29.500" y="2.500" width="20" height="21" rx="2"/><rect x="54.500" y="2.500" width="20" height="21" rx="2"/><rect x="79.500" y="2.500" width="21" height="21" rx="2"/></g><g fill="none" stroke="#9cbcf6" stroke-width="2"><path d="M33 18.500h13" stroke-width="2.500"/><path d="M58 12h9v7h-9zM62 8h9v7h-2"/><path d="M85 8l9 9.500M94 8l-9 9.500" stroke-width="3"/></g></svg>');
define('text-watermark',":host{position:absolute;left:874px;top:611px;transform:rotate(-44deg);transform-origin:0 0;color:#7f868d;opacity:.65;font-family:'Noto Sans','Noto Sans CJK SC',sans-serif;font-size:23px}",
'<fit-text w="224" style="height:33px;line-height:33px;margin:-25px 0 0 0">YES dotnet开发框架</fit-text><fit-text w="238" style="height:33px;line-height:33px;margin-left:-8px">www.yesdotnet.com</fit-text>');
define('focus-marks',':host{position:absolute;left:1532px;top:383px}',
'<svg width="160" height="42" style="display:block"><path d="M2 9V3h6M150 3h6v6M2 30v5h6M150 35h6v-6" fill="none" stroke="#8e1c26" stroke-width="2.500"/></svg>');
define('ibeam-cursor',':host{position:absolute;left:1423px;top:403px}','<svg width="15" height="26" style="display:block"><path d="M1 3h5l1.500 1L9 3h5M7.500 4v19M1 24h5l1.500-1L9 24h5" fill="none" stroke="#111" stroke-width="2"/></svg>');
define('desk-screen',`:host{width:1920px;height:1080px;position:relative;overflow:hidden;background:#000;font-family:'DejaVu Sans Condensed','DejaVu Sans',sans-serif;font-size:17.500px;font-stretch:condensed;color:#0a0e14}
.g{display:grid;grid-template-columns:96px 1728px 96px;height:1080px}.w{background:#fbfcfe;display:flex;flex-direction:column;min-height:0}.w>*{flex:none}.gap{height:11px;background:linear-gradient(#fdfdfe,#eceff5)}.p{margin:0 17px 0 16px;height:876px;border:1px solid #d3dce6;border-top:0;border-right-color:#c9d4df;background:linear-gradient(#e9f1f8,#e7eff5)}.side{overflow:hidden}.side svg{display:block}`,
`<div class="g"><div class="side"><svg width="96" height="1080"><path d="M0 35l96 210V0H0zM0 770l80 30-45 95L0 875z" fill="#0b0b0c"/></svg></div><div class="w"><sap-menu></sap-menu><sap-toolbar></sap-toolbar><div class="gap"></div>
<div class="p"><sap-title></sap-title><sap-apptools></sap-apptools><sap-header style="margin-top:10px"></sap-header><sap-items style="margin-top:65px"></sap-items><sap-tabs style="margin-top:5px"></sap-tabs><sap-form></sap-form></div>
<sap-status></sap-status><os-taskbar></os-taskbar></div><div class="side"><svg width="96" height="1080"><path d="M0 0h96v420L30 250z" fill="#070708"/></svg></div></div>
<win-grip></win-grip><focus-marks></focus-marks><ibeam-cursor></ibeam-cursor><text-watermark></text-watermark>`);
</script></body></html>
